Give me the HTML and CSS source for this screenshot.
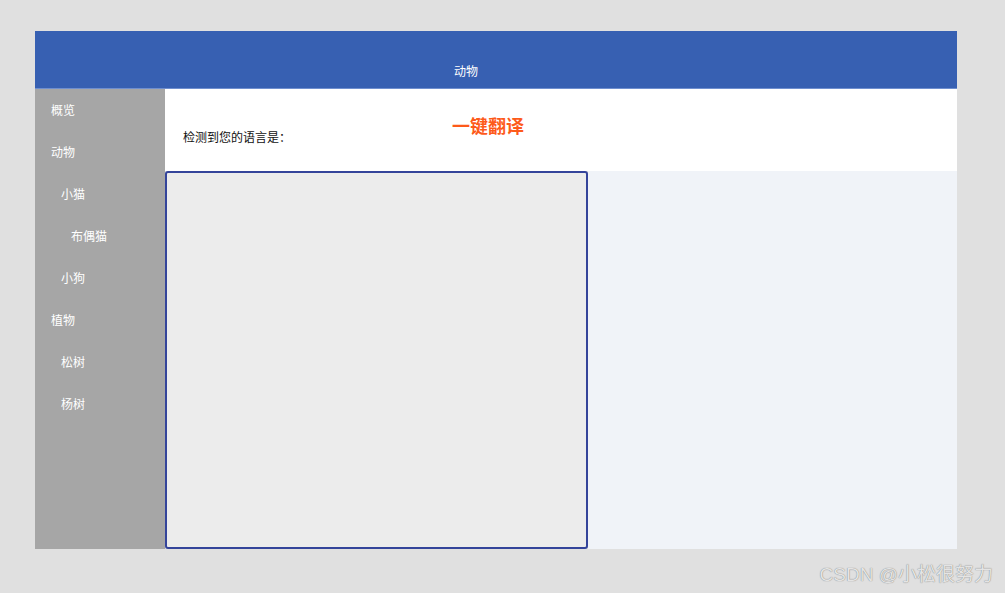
FILE: index.html
```html
<!DOCTYPE html>
<html lang="zh">
<head>
    <meta charset="UTF-8">
    <title>动物</title>
    <link rel="stylesheet" href="styles.css">
</head>
<body>
    <div class="app">
        <div class="header">动物</div>
        <div class="body">
            <div class="sidebar">
                <div class="nav-item lv1">概览</div>
                <div class="nav-item lv1">动物</div>
                <div class="nav-item lv2">小猫</div>
                <div class="nav-item lv3">布偶猫</div>
                <div class="nav-item lv2">小狗</div>
                <div class="nav-item lv1">植物</div>
                <div class="nav-item lv2">松树</div>
                <div class="nav-item lv2">杨树</div>
            </div>
            <div class="main">
                <div class="toolbar">
                    <span class="detect">检测到您的语言是：</span>
                    <span class="translate">一键翻译</span>
                </div>
                <div class="panes">
                    <div class="source"></div>
                    <div class="target"></div>
                </div>
            </div>
        </div>
    </div>
    <div class="watermark">CSDN @小松很努力</div>
</body>
</html>
```

FILE: styles.css
```css
body {
    margin: 0;
    padding: 31px 48px 0 35px;
    background-color: #e0e0e0;
    font-family: "Noto Sans CJK SC", "Liberation Sans", sans-serif;
    height: 593px;
    box-sizing: border-box;
    position: relative;
    overflow: hidden;
}
.app {
    width: 922px;
    height: 518px;
    display: flex;
    flex-direction: column;
}
.header {
    height: 58px;
    background-color: #3760b2;
    border-bottom: 1px solid #6f8fcf;
    color: white;
    font-size: 12px;
    line-height: 12px;
    padding: 34px 0 0 419px;
    box-sizing: border-box;
}
.body {
    flex: 1;
    display: flex;
}
.sidebar {
    width: 130px;
    background-color: #a6a6a6;
    padding-top: 13px;
    box-sizing: border-box;
}
.nav-item {
    height: 42px;
    line-height: 16px;
    color: white;
    font-size: 12px;
}
.lv1 { padding-left: 16px; }
.lv2 { padding-left: 26px; }
.lv3 { padding-left: 36px; }
.main {
    flex: 1;
    display: flex;
    flex-direction: column;
}
.toolbar {
    height: 82px;
    background-color: white;
    position: relative;
}
.detect {
    position: absolute;
    left: 18px;
    top: 39px;
    font-size: 12px;
    color: #111;
}
.translate {
    position: absolute;
    left: 287px;
    top: 23px;
    font-size: 18px;
    font-weight: bold;
    color: #fd5a1a;
}
.panes {
    flex: 1;
    display: flex;
}
.source {
    width: 423px;
    background-color: #ececec;
    border: 2px solid #34449a;
    border-radius: 3px;
    box-sizing: border-box;
}
.target {
    flex: 1;
    background-color: #f0f3f8;
}
.watermark {
    position: absolute;
    right: 12px;
    bottom: 7px;
    font-size: 19px;
    color: #e4e4e4;
    text-shadow: 0 0 1px #666;
    font-family: "Liberation Sans", "Noto Sans CJK SC", sans-serif;
}
```
